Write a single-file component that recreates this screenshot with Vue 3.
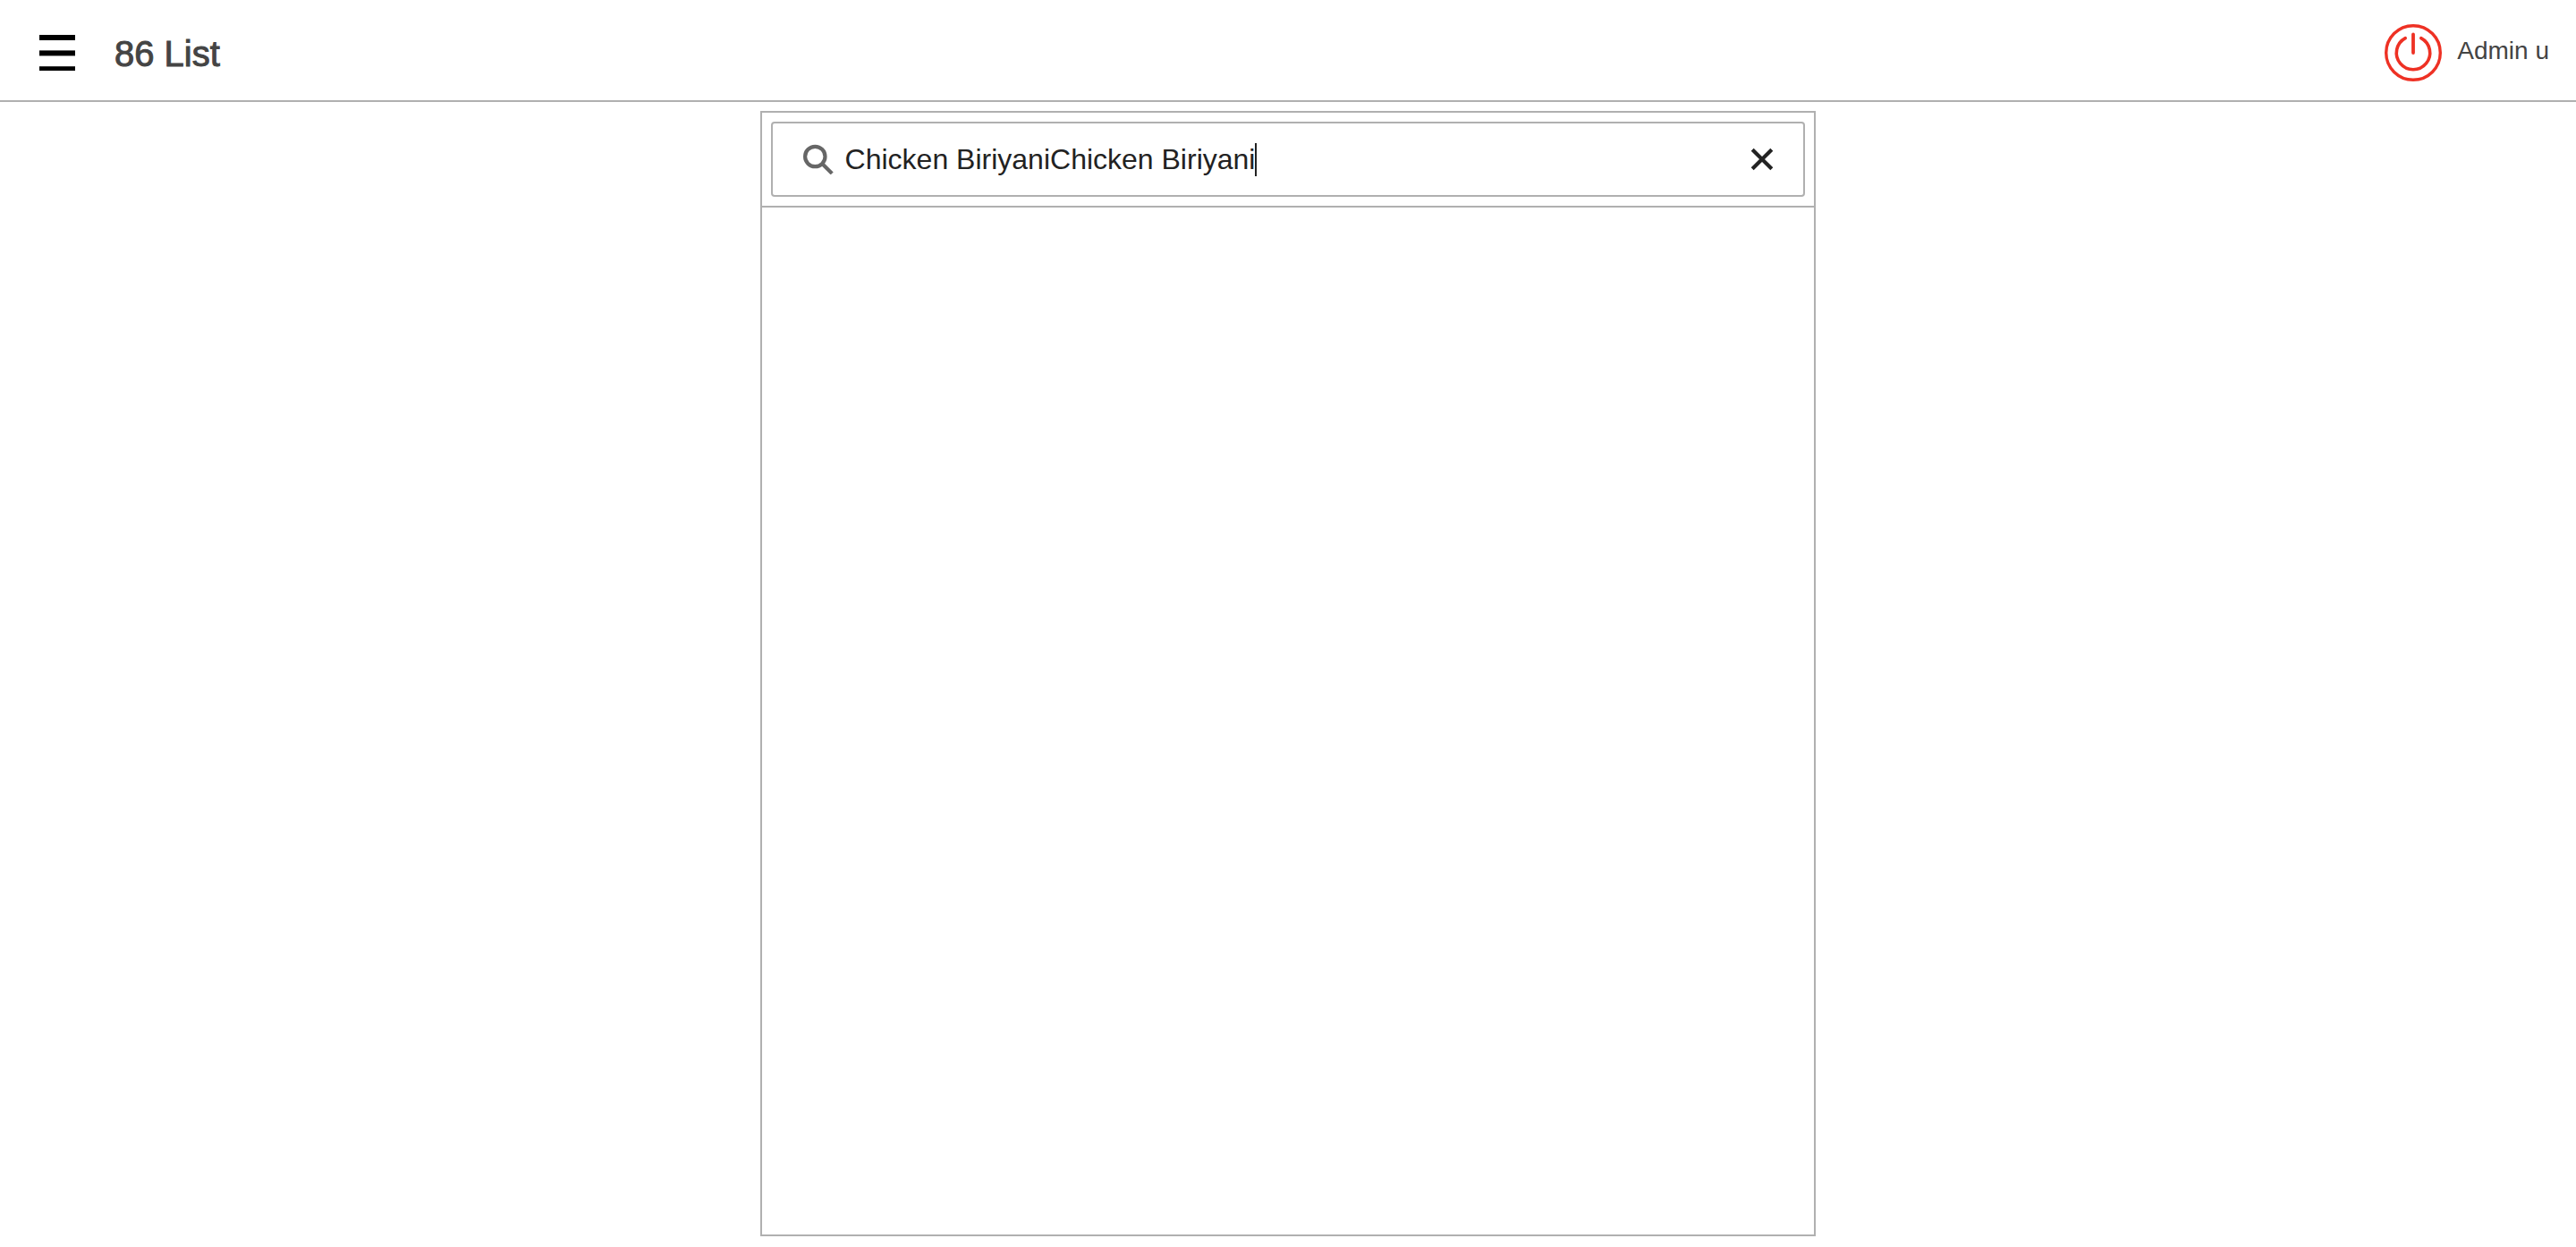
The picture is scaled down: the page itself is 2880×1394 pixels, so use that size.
<script setup>
import { ref } from 'vue'

const query = ref('Chicken BiriyaniChicken Biriyani')
</script>

<template>
  <div class="page">
    <header class="topbar">
      <button class="icon-button" type="button" aria-label="Open menu">
        <svg width="40" height="40" viewBox="0 0 40 40" fill="#000">
          <rect width="40" height="6" />
          <rect y="17.4" width="40" height="6" />
          <rect y="35.2" width="40" height="4.8" />
        </svg>
      </button>
      <h1 class="title">86 List</h1>
      <button class="user" type="button">
        <svg width="64" height="64" viewBox="0 0 64 64" fill="none" stroke="#ee3124" stroke-linecap="round">
          <circle cx="32" cy="32" r="30.3" stroke-width="3.4" />
          <path d="M23.2 15.6A18.7 18.7 0 1 0 40.8 15.6" stroke-width="3.6" />
          <path d="M32 11.4V32" stroke-width="3.8" />
        </svg>
        <span class="user-name">Admin u</span>
      </button>
    </header>

    <main class="panel">
      <div class="search-row">
        <div class="search">
          <label class="search-icon" for="search">
            <svg width="34" height="34" viewBox="0 0 34 34" fill="none" stroke="#666" stroke-width="4.2" aria-label="Search">
              <circle cx="13.3" cy="14" r="11.2" />
              <path d="M21.2 21.9L32.2 32.9" />
            </svg>
          </label>
          <input id="search" v-model="query" class="search-input" type="text" autocomplete="off" />
          <span class="caret"></span>
          <button class="icon-button clear" type="button" aria-label="Clear search" @click="query = ''">
            <svg width="26" height="26" viewBox="0 0 26 26" fill="none" stroke="#222" stroke-width="4.2">
              <path d="M2.2 2.2L23.8 23.8M23.8 2.2L2.2 23.8" />
            </svg>
          </button>
        </div>
      </div>
      <div class="results"></div>
    </main>
  </div>
</template>

<style>
body {
  margin: 0;
  background: #fff;
}
</style>

<style scoped>
.page {
  display: flex;
  flex-direction: column;
  box-sizing: border-box;
  min-height: 100vh;
  padding-bottom: 12px;
  font-family: "Liberation Sans", Arial, sans-serif;
  color: #444;
}

button {
  padding: 0;
  border: 0;
  background: none;
  font: inherit;
  color: inherit;
  cursor: pointer;
}

svg {
  display: block;
}

.topbar {
  display: flex;
  align-items: center;
  box-sizing: border-box;
  height: 114px;
  padding: 6px 30px 0 44px;
  border-bottom: 2px solid #b0b0b0;
}

.title {
  margin: 0 0 0 44px;
  padding-top: 2px;
  font-size: 40px;
  font-weight: 400;
  line-height: 48px;
  -webkit-text-stroke: 1px #444;
}

.user {
  display: flex;
  align-items: center;
  gap: 17px;
  margin-left: auto;
}

.user-name {
  padding-bottom: 4px;
  font-size: 28px;
  line-height: 32px;
}

.panel {
  display: flex;
  flex: 1;
  flex-direction: column;
  box-sizing: border-box;
  width: 41%;
  margin: 10px auto 0;
  border: 2px solid #b0b0b0;
}

.search-row {
  padding: 10px;
  border-bottom: 2px solid #b0b0b0;
}

.search {
  display: flex;
  align-items: center;
  box-sizing: border-box;
  height: 84px;
  padding: 0 33px 0 34px;
  border: 2px solid #b0b0b0;
  border-radius: 4px;
}

.search-input {
  field-sizing: content;
  min-width: 0;
  margin: 0 0 0 13px;
  padding: 0;
  border: 0;
  outline: 0;
  background: none;
  font: inherit;
  font-size: 32px;
  line-height: 38px;
  color: #222;
  caret-color: transparent;
}

.caret {
  width: 2px;
  height: 37px;
  background: #222;
}

.clear {
  margin-left: auto;
}

.results {
  flex: 1;
}
</style>
